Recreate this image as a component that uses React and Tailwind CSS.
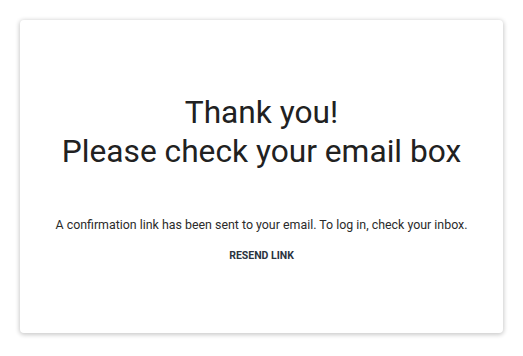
import React from 'react';

function App() {
    return (
        <div className="w-[523px] h-[356px] bg-white pt-[20px] pl-[20px]" style={{ fontFamily: 'Roboto, "Liberation Sans", sans-serif' }}>
            <div className="w-[483px] h-[313px] bg-white rounded-[4px] shadow-[0_1px_4px_1px_rgba(0,0,0,0.2)] flex flex-col items-center justify-center pt-[4px]">
                <h1 className="text-[31.7px] leading-[39px] font-normal text-[#212121] text-center">
                    Thank you!<br />Please check your email box
                </h1>
                <p className="mt-[46px] text-[12.4px] leading-[15px] text-[#2b2b2b]">
                    A confirmation link has been sent to your email. To log in, check your inbox.
                </p>
                <button className="mt-[16px] text-[10.5px] leading-[16px] font-bold uppercase text-[#2b3440]">
                    Resend link
                </button>
            </div>
        </div>
    );
}

export default App;
